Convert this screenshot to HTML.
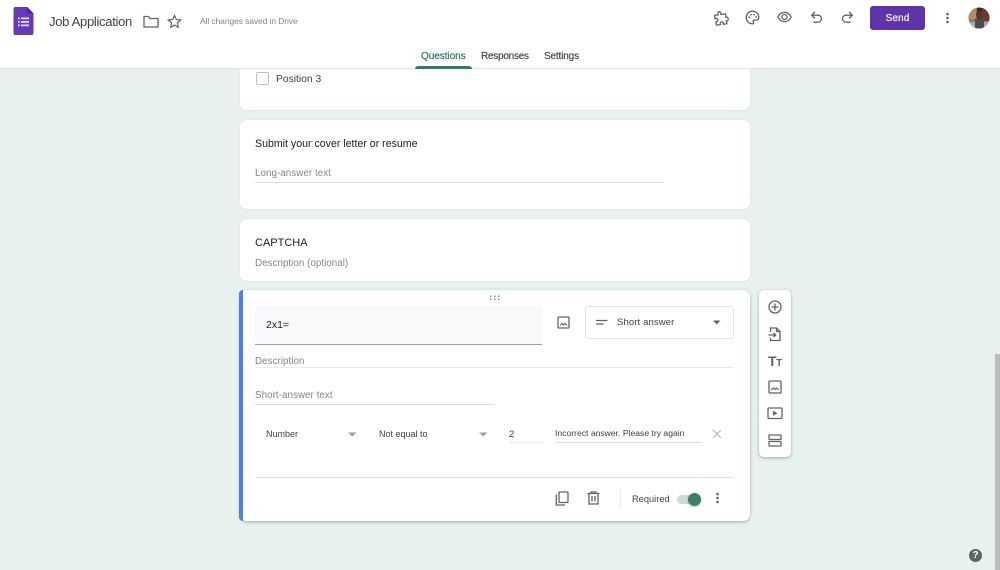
<!DOCTYPE html>
<html><head><meta charset="utf-8"><style>
html,body{margin:0;padding:0;width:1000px;height:570px;overflow:hidden;background:#e8f1ee;font-family:"Liberation Sans",sans-serif;color:#202124}
.a{position:absolute;white-space:nowrap;line-height:1}
.card{position:absolute;left:240px;width:510px;background:#fff;border-radius:7px;box-shadow:0 0 0 1px #e3e9e7}
.line{position:absolute;height:1px;background:#dadce0}
svg{position:absolute;fill:none;stroke:#5f6368;stroke-width:1.3}
.g{color:#80868b}
</style></head><body>
<div class="card" style="top:50px;height:60px"></div>
<div class="card" style="top:120px;height:89px"></div>
<div class="card" style="top:219px;height:62px"></div>
<div class="card" style="top:290px;height:231px;box-shadow:0 1px 3px rgba(60,64,67,.4)"></div>
<div class="a" style="left:239px;top:290px;width:4px;height:231px;background:#4c7fec;border-radius:4px 0 0 4px"></div>

<div class="a" style="left:0;top:0;width:1000px;height:68px;background:#fff;border-bottom:1px solid #e3e5e6"></div>
<svg style="left:13px;top:7px;stroke:none" width="21" height="28"><path d="M2 0H14L20 6.500V26a2 2 0 0 1-2 2H2a2 2 0 0 1-2-2V2a2 2 0 0 1 2-2z" fill="#673ab7" transform="translate(0.500,0)"/><path d="M14 0l6.500 6.500H14z" fill="#4e2a92"/><path d="M5 10.500h1.800v1.800H5zM8 10.500h8v1.800H8zM5 14h1.800v1.800H5zM8 14h8v1.800H8zM5 17.500h1.800v1.800H5zM8 17.500h8v1.800H8z" fill="#e6dcf5"/></svg>
<div class="a" style="left:49px;top:15px;font-size:13px;letter-spacing:-.3px;color:#3c4043">Job Application</div>
<svg style="left:143px;top:14px" width="16" height="15"><path d="M1 3V13H15V4.500H7L5.500 2.500H1z"/></svg>
<svg style="left:167px;top:14px;stroke-width:1.2" width="15" height="15"><path d="M7.500 1.500L9.300 5.500 13.700 6 10.400 9 11.300 13.300 7.500 11.100 3.700 13.300 4.600 9 1.300 6 5.700 5.500z"/></svg>
<div class="a g" style="left:200px;top:17px;font-size:8.500px;letter-spacing:-.1px">All changes saved in Drive</div>

<svg style="left:713px;top:10px" width="16" height="16"><path d="M2 4.500H5.500C5 2.500 6 1.500 7 1.500S9 2.500 8.500 4.500H13V8C14.800 7.600 15 9 15 9.800S14.800 12 13 11.500V14.500H9.500C10 12.800 9 12 8 12S6 12.800 6.500 14.500H2.500V11C4.500 11.500 4.700 10 4.700 9.300S4 7.300 2 8z" transform="rotate(-8 8 8)"/></svg>
<svg style="left:745px;top:10px" width="15" height="15"><path d="M7.500 1.200A6.300 6.300 0 1 0 7.500 13.800C9 13.800 8.800 12.500 8.300 11.800 7.800 10.800 8.500 10 9.500 10H11.500C13 10 13.800 9 13.800 7.300 13.800 4 11 1.200 7.500 1.200z"/><circle cx="4.200" cy="7.300" r=".9" fill="#5f6368" stroke="none"/><circle cx="6" cy="4.600" r=".9" fill="#5f6368" stroke="none"/><circle cx="9.200" cy="4.600" r=".9" fill="#5f6368" stroke="none"/><circle cx="11.200" cy="7" r=".9" fill="#5f6368" stroke="none"/></svg>
<svg style="left:777px;top:11px" width="15" height="12"><path d="M.8 6C2.500 2.800 5 1.300 7.500 1.300S12.500 2.800 14.200 6C12.500 9.200 10 10.700 7.500 10.700S2.500 9.200.8 6z"/><circle cx="7.500" cy="6" r="2.500"/></svg>
<svg style="left:810px;top:11px" width="13" height="13"><path d="M5 1L1.700 4.200 5 7.400M1.900 4.200H8a3.500 3.500 0 0 1 0 7H3.500"/></svg>
<svg style="left:841px;top:11px" width="13" height="13"><path d="M8 1L11.300 4.200 8 7.400M11.100 4.200H5a3.500 3.500 0 0 0 0 7h4.500"/></svg>
<div class="a" style="left:870px;top:6px;width:55px;height:24px;background:#5e35a8;border-radius:3px;color:#f0ebf8;font-size:10px;-webkit-text-stroke:.25px #f0ebf8;text-align:center;line-height:26px;letter-spacing:.1px">Send</div>
<svg style="left:945px;top:12px;stroke:none" width="6" height="12"><circle cx="2.500" cy="2" r="1.300" fill="#5f6368"/><circle cx="2.500" cy="6" r="1.300" fill="#5f6368"/><circle cx="2.500" cy="10" r="1.300" fill="#5f6368"/></svg>
<svg style="left:968px;top:7px;stroke:none" width="22" height="22"><defs><clipPath id="c"><circle cx="11" cy="11" r="10.500"/></clipPath></defs><g clip-path="url(#c)"><rect width="22" height="22" fill="#8c7a6b"/><rect width="8" height="12" fill="#b78a5f"/><rect x="9" width="13" height="13" fill="#3a2a28"/><circle cx="12" cy="8" r="4" fill="#5a3530"/><rect x="14" y="2" width="8" height="12" fill="#6b3a2d"/><rect y="15" width="22" height="7" fill="#a8a9a4"/><rect x="7" y="12" width="9" height="10" fill="#4f4a4b"/></g></svg>

<div class="a" style="left:421px;top:52px;font-size:10px;-webkit-text-stroke:.25px #2f7d68;color:#2f7d68;letter-spacing:-.05px">Questions</div>
<div class="a" style="left:481px;top:52px;font-size:10px;-webkit-text-stroke:.15px #3c4043;color:#3c4043;letter-spacing:-.25px">Responses</div>
<div class="a" style="left:544px;top:52px;font-size:10px;-webkit-text-stroke:.15px #3c4043;color:#3c4043;letter-spacing:-.15px">Settings</div>
<div class="a" style="left:415px;top:66px;width:57px;height:3px;background:#2f7d68;border-radius:3px 3px 0 0"></div>

<div class="a" style="left:256px;top:72px;width:11px;height:11px;border:1.500px solid #bcc0c4;border-radius:2px"></div>
<div class="a" style="left:276px;top:74px;font-size:10.300px;line-height:11px;color:#3c4043">Position 3</div>

<div class="a" style="left:255px;top:138px;font-size:10.600px;color:#202124;line-height:12px">Submit your cover letter or resume</div>
<div class="a g" style="left:255px;top:168px;font-size:9.800px;line-height:11px;letter-spacing:.05px">Long-answer text</div>
<div class="line" style="left:255px;top:182px;width:408px"></div>

<div class="a" style="left:255px;top:237px;font-size:11px;line-height:12px">CAPTCHA</div>
<div class="a g" style="left:255px;top:258px;font-size:9.800px;line-height:11px;letter-spacing:.03px">Description (optional)</div>

<svg style="left:489px;top:295px;stroke:none" width="12" height="6"><path d="M1 .5h1.500V2H1zM5 .5h1.500V2H5zM9 .5h1.500V2H9zM1 3.500h1.500V5H1zM5 3.500h1.500V5H5zM9 3.500h1.500V5H9z" fill="#8b9094"/></svg>
<div class="a" style="left:255px;top:306px;width:287px;height:38px;background:#f8f9fa;border-bottom:1px solid #9aa0a6"></div>
<div class="a" style="left:266px;top:320px;font-size:10.500px;line-height:11px">2x1=</div>
<svg style="left:557px;top:316px" width="13" height="13"><rect x="1" y="1" width="11" height="11" rx="1"/><path d="M3 9.500L5 7.500 6.500 9 8 7.500 10 9.500" stroke-width="1.100"/></svg>
<div class="a" style="left:585px;top:306px;width:147px;height:31px;border:1px solid #e3e5e8;border-radius:3px"></div>
<svg style="left:596px;top:319px" width="12" height="7"><path d="M0 1.500H11.500M0 5H7.500" stroke-width="1.200"/></svg>
<div class="a" style="left:617px;top:318px;font-size:9.500px;line-height:10px;color:#3c4043;letter-spacing:.12px">Short answer</div>
<svg style="left:713px;top:320px;stroke:none" width="8" height="5"><path d="M0 .5H7.500L3.750 4.500z" fill="#5f6368"/></svg>
<div class="a g" style="left:255px;top:356px;font-size:9.800px;line-height:11px;letter-spacing:.05px">Description</div>
<div class="line" style="left:255px;top:367px;width:479px;background:#e8eaed"></div>
<div class="a g" style="left:255px;top:390px;font-size:9.800px;line-height:11px;letter-spacing:.05px">Short-answer text</div>
<div class="line" style="left:255px;top:404px;width:240px"></div>
<div class="a" style="left:266px;top:429px;font-size:9px;line-height:10px;color:#3c4043">Number</div>
<svg style="left:348px;top:432px;stroke:none" width="9" height="5"><path d="M0 .5H8.500L4.250 4.500z" fill="#9aa0a6"/></svg>
<div class="a" style="left:379px;top:429px;font-size:9px;line-height:10px;color:#3c4043">Not equal to</div>
<svg style="left:479px;top:432px;stroke:none" width="9" height="5"><path d="M0 .5H8.500L4.250 4.500z" fill="#9aa0a6"/></svg>
<div class="a" style="left:509px;top:430px;font-size:9.500px;line-height:10px;color:#3c4043">2</div>
<div class="line" style="left:509px;top:442px;width:35px;background:#e8eaed"></div>
<div class="a" style="left:555px;top:428px;font-size:8.600px;line-height:10px;color:#3c4043">Incorrect answer. Please try again</div>
<div class="line" style="left:555px;top:442px;width:147px;background:#dadce0"></div>
<svg style="left:712px;top:429px;stroke:#b0b4b8;stroke-width:1.100" width="10" height="10"><path d="M1 1L9 9M9 1L1 9"/></svg>
<div class="line" style="left:255px;top:477px;width:479px;background:#e0e3e5"></div>

<svg style="left:555px;top:491px" width="14" height="15"><rect x="4" y="1" width="9" height="10.500" rx="1"/><path d="M1.300 3.500V14H10"/></svg>
<svg style="left:587px;top:491px" width="13" height="14"><path d="M.5 2.500H12.500M4 2.500V1H9V2.500M2 2.500V13H11V2.500M5 5V10.500M8 5V10.500"/></svg>
<div class="a" style="left:620px;top:489px;width:1px;height:20px;background:#e8eaed"></div>
<div class="a" style="left:632px;top:494px;font-size:9.200px;line-height:11px;color:#3c4043;letter-spacing:.05px">Required</div>
<div class="a" style="left:677px;top:495px;width:24px;height:9px;background:#c9dcd6;border-radius:5px"></div>
<div class="a" style="left:688px;top:493px;width:13px;height:13px;background:#3b8069;border-radius:50%;box-shadow:0 1px 2px rgba(0,0,0,.25)"></div>
<svg style="left:715px;top:492px;stroke:none" width="6" height="12"><circle cx="2.500" cy="2" r="1.300" fill="#5f6368"/><circle cx="2.500" cy="6" r="1.300" fill="#5f6368"/><circle cx="2.500" cy="10" r="1.300" fill="#5f6368"/></svg>

<div class="a" style="left:759px;top:290px;width:32px;height:167px;background:#fff;border-radius:5px;box-shadow:0 1px 3px rgba(60,64,67,.4)"></div>
<svg style="left:768px;top:300px" width="14" height="14"><circle cx="7" cy="7" r="6"/><path d="M7 3.500V10.500M3.500 7H10.500"/></svg>
<svg style="left:768px;top:327px" width="14" height="15"><path d="M2.500 5V1H8.500L12 4.500V13.500H2.500V10.500M8.500 1V4.500H12M0.500 8H7.500M5.500 6L7.700 8 5.500 10"/></svg>
<div class="a" style="left:768px;top:354px;font-size:14px;font-weight:bold;color:#5f6368;letter-spacing:-.5px">T<span style="font-size:10px">T</span></div>
<svg style="left:768px;top:380px" width="14" height="14"><rect x="1" y="1" width="12" height="12" rx="1"/><path d="M3 10L5.300 8 7 9.500 8.500 8 11 10" stroke-width="1.100"/></svg>
<svg style="left:767px;top:407px" width="16" height="13"><rect x="1" y="1" width="14" height="10.500" rx="1"/><path d="M6 3.700L10.500 6.200 6 8.700z" fill="#5f6368" stroke="none"/></svg>
<svg style="left:768px;top:434px" width="14" height="13"><rect x="1" y="1" width="12" height="4.500" rx=".5"/><rect x="1" y="7.500" width="12" height="4.500" rx=".5"/></svg>

<div class="a" style="left:995px;top:354px;width:5px;height:216px;background:#b8bfbd"></div>
<div class="a" style="left:969px;top:549px;width:13px;height:13px;background:#5f6368;border-radius:50%;color:#fff;font-size:10px;font-weight:bold;text-align:center;line-height:13px">?</div>
</body></html>
